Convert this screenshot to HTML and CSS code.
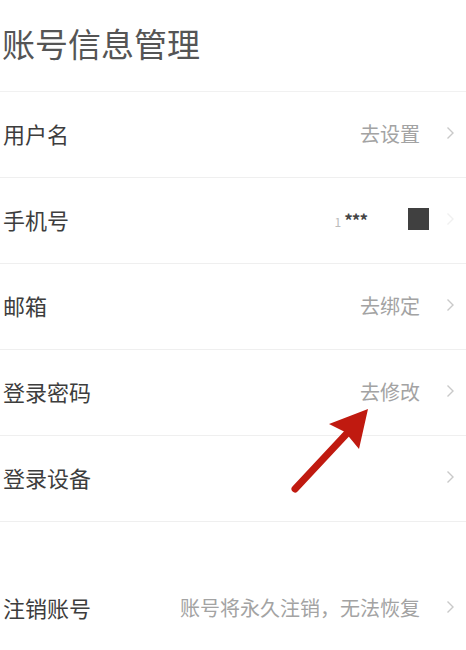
FILE: index.html
```html
<!DOCTYPE html>
<html lang="zh-CN">
<head>
    <meta charset="UTF-8">
    <meta name="viewport" content="width=device-width, initial-scale=1.0">
    <title>账号信息管理</title>
    <link rel="stylesheet" href="styles.css">
</head>
<body>

  <div class="page">
    <h1 class="page-title">账号信息管理</h1>

    <div class="list">
      <div class="row">
        <span class="label">用户名</span>
        <span class="value">去设置</span>
        <svg class="chevron" width="9" height="14" viewBox="0 0 9 14"><polyline points="1.5,1.5 7,7 1.5,12.5" fill="none" stroke="#c9c9c9" stroke-width="1.4"/></svg>
      </div>
      <div class="row">
        <span class="label">手机号</span>
        <span class="phone"><span class="phone-head">1</span>***</span>
        <span class="phone-mask"></span>
        <svg class="chevron" width="9" height="14" viewBox="0 0 9 14"><polyline points="1.5,1.5 7,7 1.5,12.5" fill="none" stroke="#f0f0f0" stroke-width="1.4"/></svg>
      </div>
      <div class="row">
        <span class="label">邮箱</span>
        <span class="value">去绑定</span>
        <svg class="chevron" width="9" height="14" viewBox="0 0 9 14"><polyline points="1.5,1.5 7,7 1.5,12.5" fill="none" stroke="#c9c9c9" stroke-width="1.4"/></svg>
      </div>
      <div class="row">
        <span class="label">登录密码</span>
        <span class="value">去修改</span>
        <svg class="chevron" width="9" height="14" viewBox="0 0 9 14"><polyline points="1.5,1.5 7,7 1.5,12.5" fill="none" stroke="#c9c9c9" stroke-width="1.4"/></svg>
      </div>
      <div class="row">
        <span class="label">登录设备</span>
        <svg class="chevron" width="9" height="14" viewBox="0 0 9 14"><polyline points="1.5,1.5 7,7 1.5,12.5" fill="none" stroke="#c9c9c9" stroke-width="1.4"/></svg>
      </div>
    </div>

    <div class="spacer"></div>

    <div class="list">
      <div class="row">
        <span class="label">注销账号</span>
        <span class="value">账号将永久注销，无法恢复</span>
        <svg class="chevron" width="9" height="14" viewBox="0 0 9 14"><polyline points="1.5,1.5 7,7 1.5,12.5" fill="none" stroke="#c9c9c9" stroke-width="1.4"/></svg>
      </div>
    </div>

    <!-- red pointer drawn on top of the screenshot -->
    <svg class="pointer" width="466" height="650" viewBox="0 0 466 650">
      <line x1="295" y1="489" x2="352" y2="428" stroke="#c01a10" stroke-width="7" stroke-linecap="round"/>
      <polygon points="368,409 329,424 345,432 359,449" fill="#c01a10"/>
    </svg>
  </div>

</body>
</html>
```

FILE: styles.css
```css
body {
  margin: 0;
  background-color: #fff;
  font-family: "Noto Sans CJK SC", "Noto Sans", sans-serif;
}

.page {
  position: relative;
  width: 466px;
  height: 650px;
  overflow: hidden;
}

.page-title {
  margin: 0;
  height: 92px;
  padding-left: 2px;
  padding-bottom: 6px;
  display: flex;
  align-items: center;
  font-size: 33px;
  font-weight: 400;
  color: #555;
  border-bottom: 1px solid #f1f1f1;
  box-sizing: border-box;
}

.row {
  height: 86px;
  display: flex;
  align-items: center;
  padding-left: 3px;
  padding-right: 11px;
  padding-bottom: 3px;
  border-bottom: 1px solid #efefef;
  box-sizing: border-box;
}

.label {
  flex: 1;
  font-size: 22px;
  color: #3d3d3d;
}

.value {
  font-size: 20px;
  color: #a3a3a3;
  margin-right: 26px;
}

.phone {
  font-size: 17px;
  font-weight: 700;
  color: #444;
  margin-right: 41px;
  letter-spacing: -1px;
}

.phone-head {
  font-size: 12px;
  font-weight: 400;
  color: #bbb;
  margin-right: 4px;
}

.phone-mask {
  width: 21px;
  height: 22px;
  background-color: #404040;
  margin-right: 17px;
}

.chevron {
  display: block;
}

.spacer {
  height: 44px;
}

.pointer {
  position: absolute;
  left: 0;
  top: 0;
}
```
